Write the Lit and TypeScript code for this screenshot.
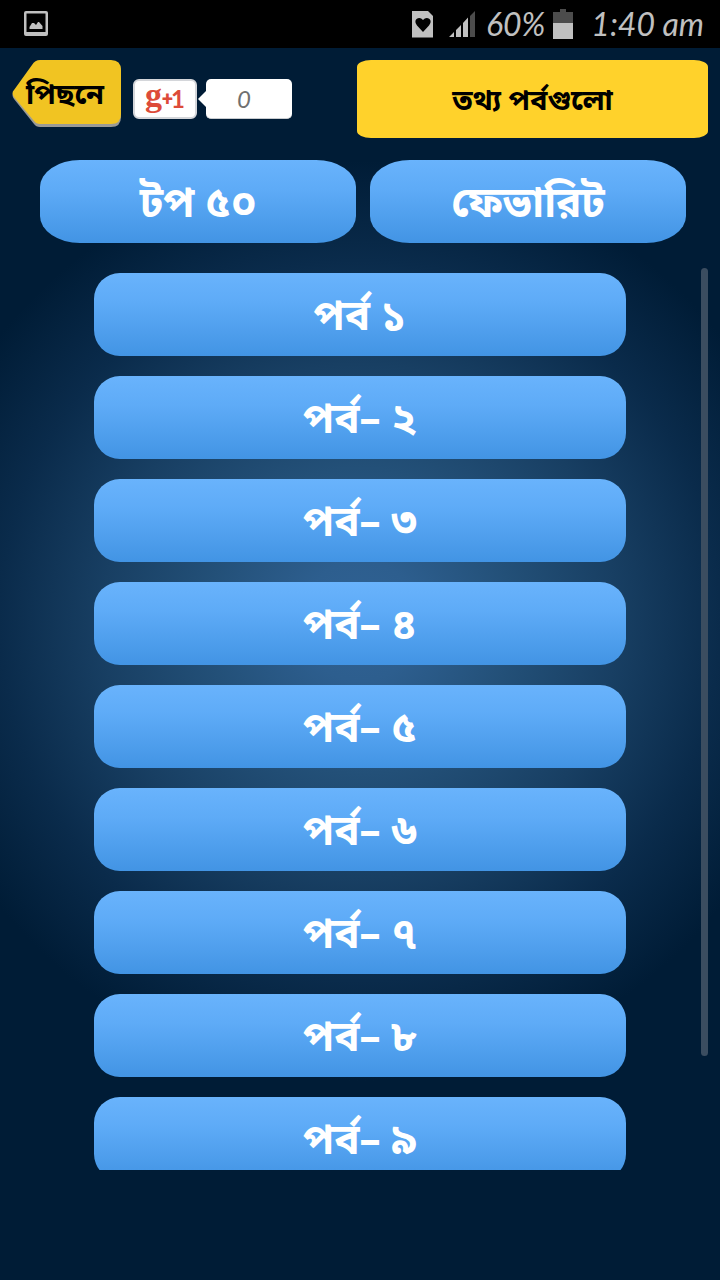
import { LitElement, html, css } from "lit";
import { customElement, property } from "lit/decorators.js";

@customElement("status-bar")
class StatusBar extends LitElement {
  static styles = css`
    :host {
      display: flex;
      align-items: center;
      flex: none;
      height: 48px;
      padding: 0 16px 0 24px;
      background: #000;
      color: #c0c0c0;
      font: italic 32px/48px Lato, "Liberation Sans", sans-serif;
      white-space: pre;
    }
    svg { display: block; flex: none; }
    .spacer { flex: 1; }
    .signal { margin: 0 10px 0 14px; }
    .battery { margin: 0 18px 0 8px; }
  `;

  render() {
    return html`
      <svg width="24" height="26" viewBox="0 0 24 26" aria-hidden="true">
        <path fill="#c0c0c0" fill-rule="evenodd" d="M2 0h20a2 2 0 0 1 2 2v21a2 2 0 0 1-2 2H2a2 2 0 0 1-2-2V2a2 2 0 0 1 2-2zM2.500 2.500v18.500h19V2.500z" />
        <path fill="#c0c0c0" d="M5.500 18v-2l2.500-4h2l2 2 2-3h1l3.500 4v3z" />
      </svg>
      <span class="spacer"></span>
      <svg width="22" height="28" viewBox="0 0 22 28" aria-hidden="true">
        <path fill="#c0c0c0" d="M0 1h16l5 5v21.500H0z" />
        <path fill="#000" d="M11 22l-6-6.500q-3-4-.5-6.500 3.500-2.500 6.500 1 3-3.500 6.500-1 2.500 2.500-.5 6.500z" />
      </svg>
      <svg class="signal" width="28" height="28" viewBox="0 0 28 28" aria-hidden="true">
        <path fill="#c0c0c0" d="M1 27l5-5v5zM8 20l5-5v12H8zM15 13l5-5.500V27h-5z" />
        <path fill="#4c4c4c" d="M22 6l5-5v26h-5z" />
      </svg>
      <span>60%</span>
      <svg class="battery" width="20" height="30" viewBox="0 0 20 30" aria-hidden="true">
        <path fill="#4c4c4c" d="M7 0h6v3h7v11H0V3h7z" />
        <path fill="#c0c0c0" d="M0 14h20v16H0z" />
      </svg>
      <span>1:40 am</span>
    `;
  }
}

@customElement("plus-one")
class PlusOne extends LitElement {
  @property({ type: Number }) count = 0;

  static styles = css`
    :host { display: flex; align-items: center; }
    .plus {
      display: flex;
      align-items: center;
      justify-content: center;
      width: 64px;
      height: 40px;
      padding: 0;
      box-sizing: border-box;
      border: 2px solid #d4d6da;
      border-radius: 6px;
      background: #fff;
      color: #dd4b39;
      cursor: pointer;
    }
    .letter { padding-bottom: 8px; font: bold 34px/28px "Liberation Serif", serif; }
    .sign { font: bold 20px/36px Roboto, sans-serif; }
    .one { font: bold 24px/36px Lato, sans-serif; margin-left: -2px; }
    .tip { display: block; margin-left: 1px; }
    .count {
      width: 86px;
      height: 40px;
      box-sizing: border-box;
      padding-right: 10px;
      border-bottom: 1px solid #c8ccd0;
      border-radius: 5px;
      background: #fff;
      color: #707070;
      font: italic 24px/40px Lato, sans-serif;
      text-align: center;
    }
  `;

  render() {
    return html`
      <button class="plus" type="button"><span class="letter">g</span><span class="sign">+</span><span class="one">1</span></button>
      <svg class="tip" width="8" height="16" viewBox="0 0 8 16" aria-hidden="true"><path fill="#fff" d="M8 0v16L0 8z" /></svg>
      <span class="count">${this.count}</span>
    `;
  }
}

@customElement("app-root")
class AppRoot extends LitElement {
  static styles = css`
    :host {
      display: flex;
      flex-direction: column;
      height: 100vh;
      overflow: hidden;
      background: radial-gradient(circle at 50% 48.5%, #306294 0, #2d5e8e 60px, #235078 153px, #183f63 257px, #0a2b4b 360px, #001c36 460px);
      font-family: "Noto Sans Bengali", "Noto Sans", sans-serif;
    }
    button { font-family: inherit; font-weight: bold; border: 0; cursor: pointer; }
    header {
      display: flex;
      align-items: flex-start;
      gap: 12px;
      padding: 12px 12px 0;
    }
    .back {
      display: grid;
      align-items: center;
      width: 109px;
      height: 67px;
      padding: 0;
      background: none;
      color: #000;
    }
    .back > * { grid-area: 1 / 1; }
    .back span { padding: 6px 0 0 14px; font-size: 29px; line-height: 61px; white-space: nowrap; text-align: left; }
    .plus-one { margin-top: 19px; }
    h1 {
      flex: 1;
      max-width: 351px;
      box-sizing: border-box;
      margin: 0 0 0 auto;
      padding-top: 8px;
      border-radius: 14px / 7px;
      background: #ffd22b;
      color: #000;
      font-size: 29px;
      line-height: 70px;
      text-align: center;
      white-space: nowrap;
    }
    .tabs {
      display: grid;
      grid-template-columns: 1fr 1fr;
      gap: 14px;
      padding: 22px 34px 21px 40px;
    }
    .pill {
      height: 83px;
      padding: 10px 0 0;
      border-radius: 26px;
      background: linear-gradient(#69b3fc, #5eabf7 35%, #4294e4);
      color: #fff;
      font-size: 42px;
      line-height: 73px;
      white-space: nowrap;
    }
    .tabs .pill { border-radius: 40px / 27px; }
    .frame {
      position: relative;
      flex: 1;
      min-height: 0;
      display: flex;
      margin-bottom: 110px;
    }
    .list {
      flex: 1;
      display: flex;
      flex-direction: column;
      gap: 20px;
      margin: 0;
      padding: 9px 13%;
      overflow-y: auto;
      scrollbar-width: none;
      list-style: none;
    }
    .list .pill { display: block; width: 100%; }
    .thumb {
      position: absolute;
      top: 4px;
      right: 12px;
      width: 7px;
      height: 87%;
      border-radius: 4px;
      background: #3b4d60;
    }
  `;

  private episodes = ["পর্ব ১", "পর্ব– ২", "পর্ব– ৩", "পর্ব– ৪", "পর্ব– ৫", "পর্ব– ৬", "পর্ব– ৭", "পর্ব– ৮", "পর্ব– ৯"];

  render() {
    return html`
      <status-bar></status-bar>
      <header>
        <button class="back" type="button">
          <svg width="109" height="67" viewBox="0 0 109 67" aria-hidden="true">
            <path fill="#9a9a96" d="M28 2h71q10 0 10 10v45q0 10-10 10H28q-4 0-6-3L2 39q-3-4 0-7z" />
            <path fill="#f1c422" d="M28 0h71q10 0 10 10v44q0 10-10 10H28q-4 0-6-3L2 37q-3-4 0-7L20 5q3-5 8-5z" />
          </svg>
          <span>পিছনে</span>
        </button>
        <plus-one class="plus-one" .count=${0}></plus-one>
        <h1>তথ্য পর্বগুলো</h1>
      </header>
      <nav class="tabs">
        <button class="pill" type="button">টপ ৫০</button>
        <button class="pill" type="button">ফেভারিট</button>
      </nav>
      <div class="frame">
        <ul class="list">
          ${this.episodes.map((name) => html`<li><button class="pill" type="button">${name}</button></li>`)}
        </ul>
        <div class="thumb"></div>
      </div>
    `;
  }
}
